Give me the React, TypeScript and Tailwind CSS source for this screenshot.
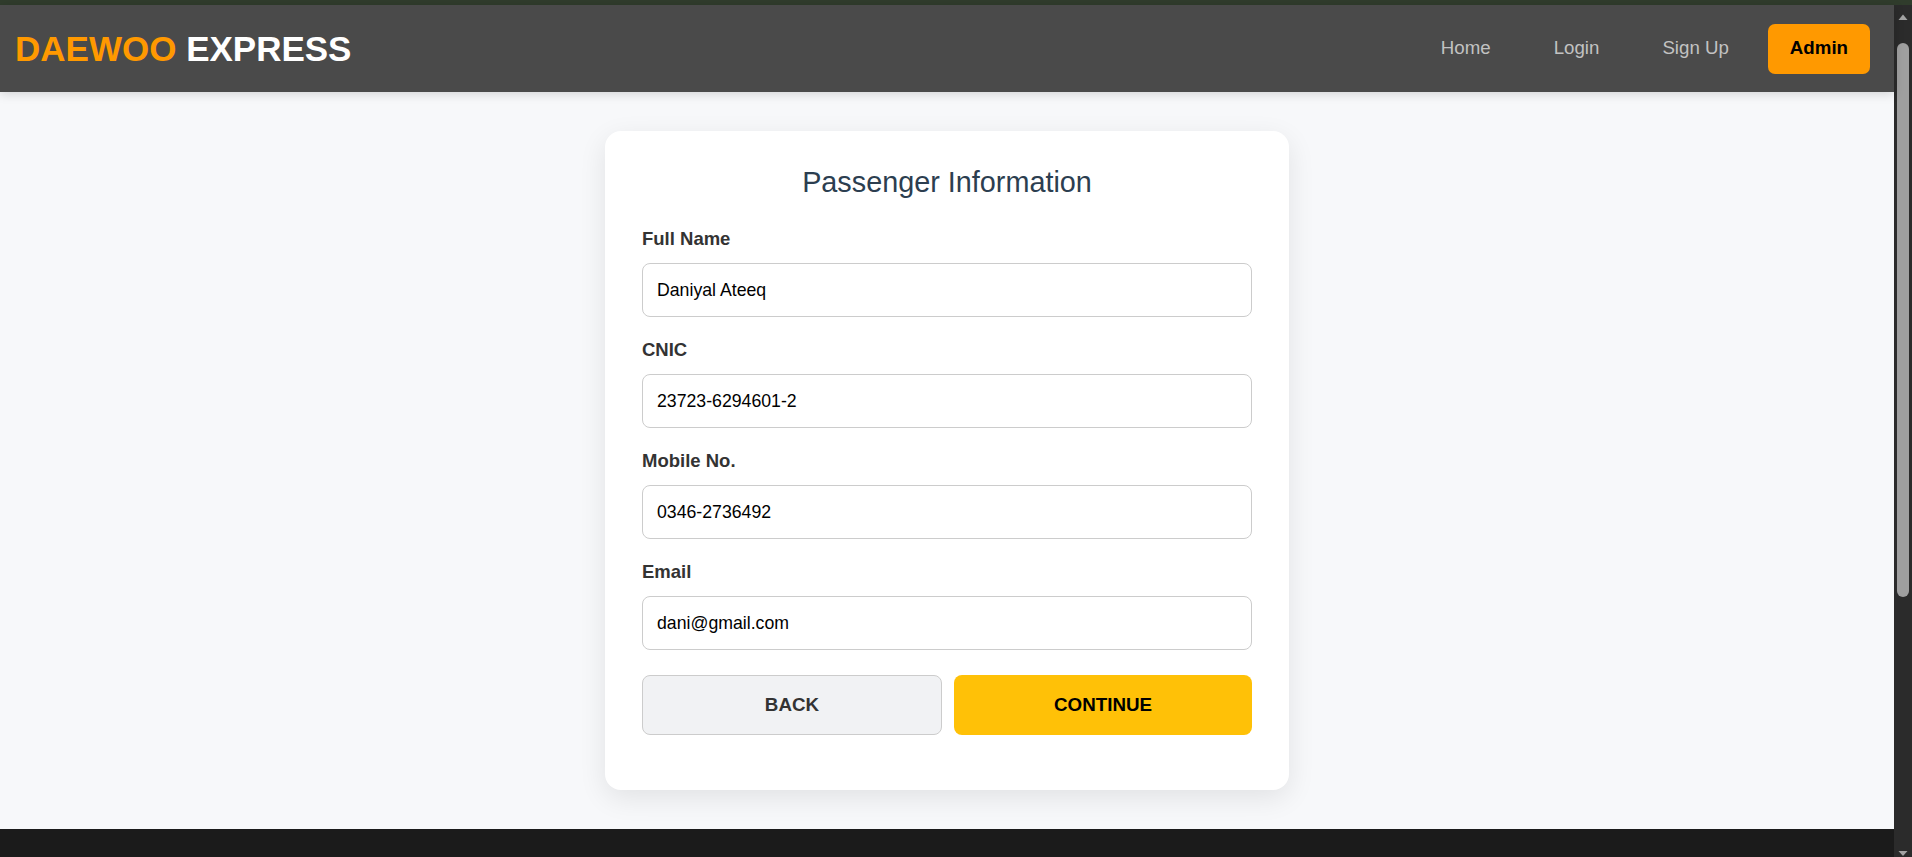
import React, { useState } from 'react';

const Field: React.FC<{ label: string; value: string; onChange: (v: string) => void }> = ({ label, value, onChange }) => (
  <div className="flex flex-col">
    <label className="mb-[14px] text-[18.5px] font-bold leading-[21px] text-[#333333]">{label}</label>
    <input
      value={value}
      onChange={(e) => onChange(e.target.value)}
      className="h-[54px] w-full rounded-[8px] border border-[#cccccc] bg-white px-[14px] text-[17.7px] text-black outline-none focus:border-[#ffc107]"
    />
  </div>
);

// browser scrollbar as it shows in the screenshot
const ScrollBar: React.FC = () => (
  <div className="w-[18px] shrink-0 bg-[#2b2b2b]">
    <svg width="18" height="852" viewBox="0 0 18 852" className="block">
      <polygon points="4.5,15 13.5,15 9,9.5" fill="#a3a3a3" />
      <rect x="3" y="38" width="12" height="554" rx="6" fill="#9f9f9f" />
      <polygon points="4.5,846 13.5,846 9,851" fill="#a3a3a3" />
    </svg>
  </div>
);

const App: React.FC = () => {
  const [name, setName] = useState('Daniyal Ateeq');
  const [cnic, setCnic] = useState('23723-6294601-2');
  const [mobile, setMobile] = useState('0346-2736492');
  const [email, setEmail] = useState('dani@gmail.com');

  return (
    <div className="flex h-screen flex-col overflow-hidden font-['Liberation_Sans',Arial,sans-serif]">
      {/* window strip */}
      <div className="h-[5px] shrink-0 bg-[#303c2c]" />

      <div className="flex min-h-0 flex-1">
        <div className="flex min-w-0 flex-1 flex-col bg-[#f7f8fa]">
          {/* Navbar */}
          <nav className="relative z-10 flex h-[87px] shrink-0 items-center justify-between bg-[#4a4a4a] pl-[15px] pr-[24px] shadow-[0_2px_10px_rgba(0,0,0,0.15)]">
            <div className="text-[35px] font-bold leading-none">
              <span className="text-[#ff9900]">DAEWOO</span> <span className="text-white">EXPRESS</span>
            </div>
            <div className="flex items-center">
              <div className="flex items-center gap-[63px] text-[18.7px] text-[#c2c2c2]">
                <a href="#" className="hover:text-white">Home</a>
                <a href="#" className="hover:text-white">Login</a>
                <a href="#" className="hover:text-white">Sign Up</a>
              </div>
              <button className="ml-[39px] h-[50px] rounded-[7px] bg-[#ff9900] px-[22px] text-[18.7px] font-bold text-black">
                Admin
              </button>
            </div>
          </nav>

          {/* Main */}
          <main className="flex shrink-0 justify-center pb-[39px] pt-[39px]">
            <div className="w-[684px] rounded-[16px] bg-white px-[37px] pb-[55px] pt-[35px] shadow-[0_8px_28px_rgba(0,0,0,0.09)]">
              <h2 className="mb-[29px] text-center text-[28.8px] font-normal leading-[33px] text-[#2c3e50]">
                Passenger Information
              </h2>

              <div className="flex flex-col gap-[22px]">
                <Field label="Full Name" value={name} onChange={setName} />
                <Field label="CNIC" value={cnic} onChange={setCnic} />
                <Field label="Mobile No." value={mobile} onChange={setMobile} />
                <Field label="Email" value={email} onChange={setEmail} />
              </div>

              <div className="mt-[25px] flex gap-[12px]">
                <button className="h-[60px] flex-1 rounded-[8px] border border-[#cccccc] bg-[#f1f2f4] text-[18.8px] font-bold text-[#333333]">
                  BACK
                </button>
                <button className="h-[60px] flex-1 rounded-[8px] bg-[#ffc107] text-[18.8px] font-bold text-black">
                  CONTINUE
                </button>
              </div>
            </div>
          </main>

          {/* Footer */}
          <footer className="min-h-[434px] flex-1 bg-[#1b1b1b]" />
        </div>

        <ScrollBar />
      </div>
    </div>
  );
};

export default App;
